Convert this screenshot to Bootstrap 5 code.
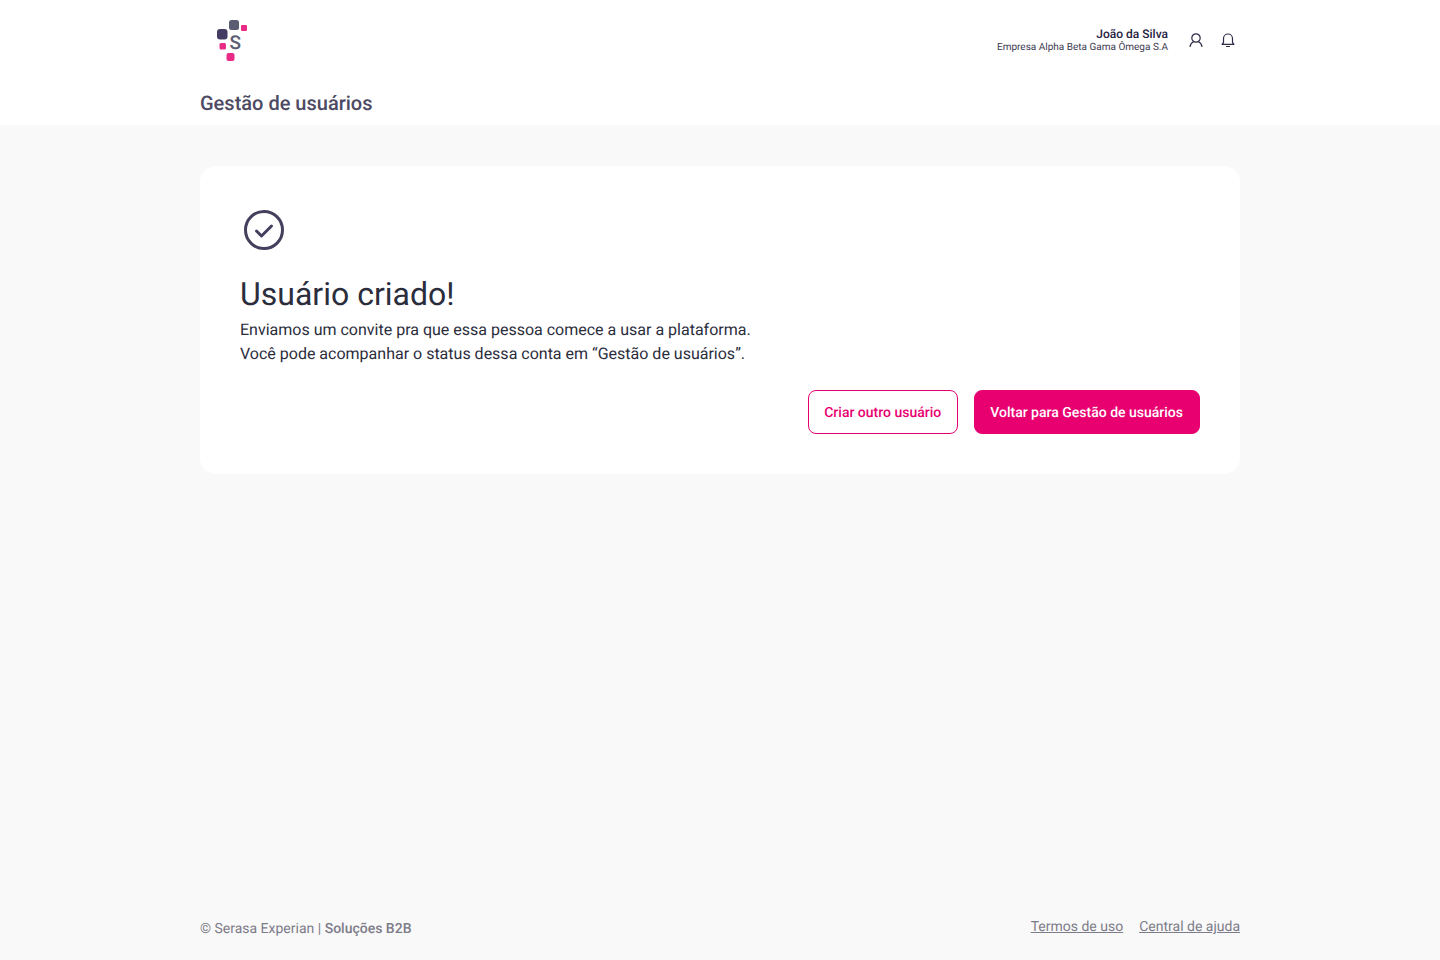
<!DOCTYPE html>
<html lang="pt-BR">
<head>
  <meta charset="UTF-8">
  <title>Gestão de usuários</title>
  <meta name="viewport" content="width=device-width, initial-scale=1">
  <link href="https://cdn.jsdelivr.net/npm/bootstrap@5.3.0/dist/css/bootstrap.min.css" rel="stylesheet">
  <style>
    body { font-family: Roboto, "Liberation Sans", sans-serif; background-color: #f9f9f9; color: #26213f; min-height: 960px; text-rendering: geometricPrecision; }
    .page-wrap { width: 1040px; }
    .top-area { height: 125px; }
    .top-bar { height: 80px; }
    .logo-box { margin-left: 16px; margin-top: 2px; }
    .user-name { font-size: 12px; line-height: 14px; font-weight: 500; color: #26213f; }
    .user-company { font-size: 10px; line-height: 12px; color: #3c3a50; margin-top: 1px; }
    .top-icons { gap: 16px; margin-left: 20px; margin-right: 4px; }
    .page-name { font-size: 20px; line-height: 24px; font-weight: 500; color: #4d4a63; margin: 0; padding-top: 11px; }
    .main-area { padding-top: 41px; height: 785px; }
    .done-card { border: 0; border-radius: 16px; padding: 40px; height: 308px; }
    .done-icon { flex-shrink: 0; }
    .done-title { font-size: 32px; line-height: 40px; font-weight: 400; color: #2b2d3c; margin: 20px 0 0; }
    .done-text { font-size: 16px; line-height: 24px; color: #2b2d3c; margin: 4px 0 0; }
    .btn-row { gap: 16px; margin-top: 24px; }
    .btn-pink, .btn-pink-line { font-size: 14px; font-weight: 500; line-height: 16px; padding: 14px 16px 12px 15px; border-radius: 8px; height: 44px; }
    .btn-pink { background-color: #e80070; border: 1px solid #e80070; color: #fff; }
    .btn-pink-line { background-color: #fff; border: 1px solid #e80070; color: #e80070; }
    .foot-area { height: 50px; padding-top: 11px; color: #7d7c89; font-size: 14px; line-height: 16px; }
    .foot-area a { color: #7d7c89; }
    .foot-links { gap: 16px; margin-top: -2px; }
  </style>
</head>
<body>

<header class="top-area bg-white">
  <div class="page-wrap mx-auto">
    <div class="top-bar d-flex justify-content-between align-items-center">
      <div class="logo-box">
        <svg width="32" height="42" viewBox="0 0 32 42">
          <rect x="13" y="0" width="10" height="10" rx="2.5" fill="#5a5d72"/>
          <rect x="1" y="9" width="10.5" height="10.5" rx="3" fill="#453c63"/>
          <rect x="25" y="5" width="6" height="6" rx="1" fill="#ea2a87"/>
          <rect x="3.5" y="23" width="6.5" height="6.5" rx="1.5" fill="#ea2a87"/>
          <rect x="10.500" y="33" width="8" height="8" rx="2" fill="#ea2a87"/>
          <text x="13.500" y="29" font-family="Roboto, sans-serif" font-size="19" font-weight="500" fill="#5a5d72">S</text>
        </svg>
      </div>
      <div class="d-flex align-items-center">
        <div class="text-end">
          <div class="user-name">João da Silva</div>
          <div class="user-company">Empresa Alpha Beta Gama Ômega S.A</div>
        </div>
        <div class="top-icons d-flex align-items-center">
          <svg width="16" height="16" viewBox="0 0 16 16" fill="none" stroke="#2f2b45" stroke-width="1.200" stroke-linecap="round">
            <circle cx="8" cy="6" r="4.200"/>
            <path d="M2 14.500c.6-2.800 2.400-4.400 3.600-4.800M14 14.500c-.6-2.800-2.400-4.400-3.600-4.800"/>
          </svg>
          <svg width="16" height="16" viewBox="0 0 16 16" fill="none" stroke="#2f2b45" stroke-width="1.200" stroke-linejoin="round">
            <path d="M3.500 10.500V6.500a4.500 4.500 0 0 1 9 0v4l1.500 1.800h-12z"/>
            <path d="M6.500 14.500h3" stroke-linecap="round"/>
          </svg>
        </div>
      </div>
    </div>
    <h1 class="page-name">Gestão de usuários</h1>
  </div>
</header>

<main class="main-area">
  <div class="page-wrap mx-auto">
    <div class="card done-card bg-white">
      <svg class="done-icon" width="48" height="48" viewBox="0 0 48 48" fill="none" stroke="#453f5e" stroke-width="3" stroke-linecap="round" stroke-linejoin="round">
        <circle cx="24" cy="24" r="18.500"/>
        <path d="M16.500 25l5 5 10-10"/>
      </svg>
      <h2 class="done-title">Usuário criado!</h2>
      <p class="done-text">Enviamos um convite pra que essa pessoa comece a usar a plataforma.<br>Você pode acompanhar o status dessa conta em “Gestão de usuários”.</p>
      <div class="btn-row d-flex justify-content-end">
        <a href="#" class="btn btn-pink-line">Criar outro usuário</a>
        <a href="#" class="btn btn-pink">Voltar para Gestão de usuários</a>
      </div>
    </div>
  </div>
</main>

<footer class="foot-area">
  <div class="page-wrap mx-auto d-flex justify-content-between">
    <div>© Serasa Experian | <strong class="fw-medium">Soluções B2B</strong></div>
    <div class="foot-links d-flex">
      <a href="#">Termos de uso</a>
      <a href="#">Central de ajuda</a>
    </div>
  </div>
</footer>

</body>
</html>
